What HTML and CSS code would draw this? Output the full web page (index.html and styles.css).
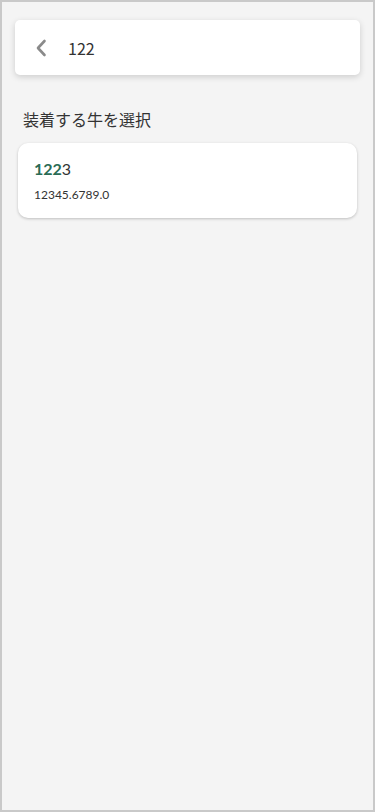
FILE: index.html
```html
<!DOCTYPE html>
<html lang="ja">
<head>
<meta charset="utf-8">
<meta name="viewport" content="width=device-width, initial-scale=1">
<title>装着する牛を選択</title>
<link rel="stylesheet" href="styles.css">
</head>
<body>
<div class="frame">
  <div class="search">
    <button class="back" aria-label="戻る">
      <svg width="12" height="18" viewBox="0 0 12 18" fill="none">
        <path d="M9.5 2 L3 9 L9.5 16" stroke="#8a8a8a" stroke-width="2.6" stroke-linecap="round" stroke-linejoin="round"/>
      </svg>
    </button>
    <span class="query">122</span>
  </div>
  <h2 class="title">装着する牛を選択</h2>
  <div class="item">
    <div class="item-name"><span class="hl">122</span><span class="rest">3</span></div>
    <div class="item-sub">12345.6789.0</div>
  </div>
</div>
</body>
</html>
```
FILE: styles.css
```css
* { box-sizing: border-box; }
html, body { margin: 0; padding: 0; }
body {
  font-family: "Noto Sans CJK JP", "Noto Sans", sans-serif;
  color: #333;
  background: #f4f4f4;
}
.frame {
  height: 812px;
  border: 2px solid #c9c9c9;
  background: #f4f4f4;
  padding: 18px 13px 0 13px;
}
.search {
  height: 55px;
  background: #fff;
  border-radius: 5px;
  box-shadow: 0 2px 6px rgba(0, 0, 0, 0.16);
  display: flex;
  align-items: center;
  padding-left: 20px;
}
.back {
  border: 0;
  background: none;
  padding: 0;
  width: 12px;
  height: 18px;
  display: flex;
}
.query {
  margin-left: 21px;
  font-size: 16px;
  line-height: 24px;
  color: #333;
}
.title {
  margin: 32px 0 0 8px;
  font-size: 16px;
  line-height: 24px;
  font-weight: 400;
  color: #333;
}
.item {
  margin: 12px 3px 0 3px;
  background: #fff;
  border-radius: 10px;
  box-shadow: 0 1px 3px rgba(0, 0, 0, 0.22);
  padding: 16px 16px 15px 16px;
  font-family: Lato, "Noto Sans", sans-serif;
}
.item-name {
  font-size: 16px;
  line-height: 20px;
  color: #333;
}
.hl {
  color: #2a6c55;
  font-weight: 700;
}
.rest {
  font-weight: 400;
}
.item-sub {
  margin-top: 8px;
  font-size: 12px;
  line-height: 16px;
  color: #333;
}
```
